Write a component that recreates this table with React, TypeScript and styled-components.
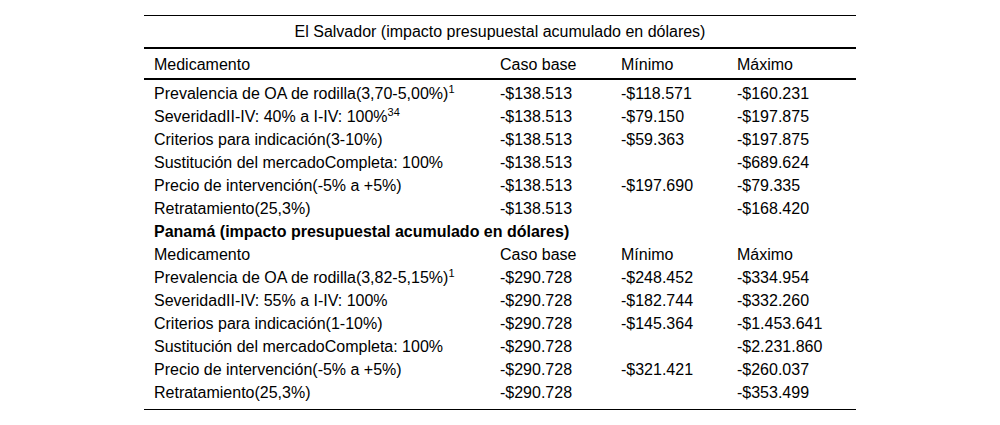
import React from "react";
import styled, { createGlobalStyle } from "styled-components";

const Global = createGlobalStyle`
  html, body { margin: 0; padding: 0; background: #fff; }
  body { font-family: "Liberation Sans", Arial, sans-serif; color: #000; }
`;

const Page = styled.div`
  display: flex;
  justify-content: center;
  padding-top: 15px;
`;

const Table = styled.table`
  width: 712px;
  border-collapse: collapse;
  font-size: 16px;
  table-layout: fixed;
  border-top: 1px solid #000;
  border-bottom: 1px solid #000;
`;

const TitleCell = styled.th`
  font-weight: normal;
  text-align: center;
  height: 31px;
  padding: 0;
  border-bottom: 2px solid #000;
`;

const HeadRow = styled.tr<{ $ruled?: boolean }>`
  height: ${(p) => (p.$ruled ? "31px" : "23px")};
  border-bottom: ${(p) => (p.$ruled ? "2px solid #000" : "none")};
  ${(p) => (p.$ruled ? "td { padding-top: 1px; }" : "")}
`;

const Cell = styled.td<{ $bold?: boolean }>`
  padding: 0 0 0 10px;
  white-space: nowrap;
  line-height: 23px;
  font-weight: ${(p) => (p.$bold ? "bold" : "normal")};
`;

const Row = styled.tr<{ $first?: boolean; $last?: boolean }>`
  height: 23px;
  ${(p) => (p.$first ? "height: 25px; td { padding-top: 2px; }" : "")}
  ${(p) => (p.$last ? "height: 28px; td { padding-bottom: 5px; }" : "")}
`;

const Sup = styled.sup`
  font-size: 11px;
  vertical-align: 6px;
  line-height: 0;
`;

type R = { label: React.ReactNode; base: string; min: string; max: string };

const salvador: R[] = [
  { label: <>Prevalencia de OA de rodilla(3,70-5,00%)<Sup>1</Sup></>, base: "-$138.513", min: "-$118.571", max: "-$160.231" },
  { label: <>SeveridadII-IV: 40% a I-IV: 100%<Sup>34</Sup></>, base: "-$138.513", min: "-$79.150", max: "-$197.875" },
  { label: "Criterios para indicación(3-10%)", base: "-$138.513", min: "-$59.363", max: "-$197.875" },
  { label: "Sustitución del mercadoCompleta: 100%", base: "-$138.513", min: "", max: "-$689.624" },
  { label: "Precio de intervención(-5% a +5%)", base: "-$138.513", min: "-$197.690", max: "-$79.335" },
  { label: "Retratamiento(25,3%)", base: "-$138.513", min: "", max: "-$168.420" },
];

const panama: R[] = [
  { label: <>Prevalencia de OA de rodilla(3,82-5,15%)<Sup>1</Sup></>, base: "-$290.728", min: "-$248.452", max: "-$334.954" },
  { label: "SeveridadII-IV: 55% a I-IV: 100%", base: "-$290.728", min: "-$182.744", max: "-$332.260" },
  { label: "Criterios para indicación(1-10%)", base: "-$290.728", min: "-$145.364", max: "-$1.453.641" },
  { label: "Sustitución del mercadoCompleta: 100%", base: "-$290.728", min: "", max: "-$2.231.860" },
  { label: "Precio de intervención(-5% a +5%)", base: "-$290.728", min: "-$321.421", max: "-$260.037" },
  { label: "Retratamiento(25,3%)", base: "-$290.728", min: "", max: "-$353.499" },
];

const DataRow = ({ r, first, last }: { r: R; first?: boolean; last?: boolean }) => (
  <Row $first={first} $last={last}>
    <Cell>{r.label}</Cell>
    <Cell>{r.base}</Cell>
    <Cell>{r.min}</Cell>
    <Cell>{r.max}</Cell>
  </Row>
);

const Header = ({ ruled }: { ruled?: boolean }) => (
  <HeadRow $ruled={ruled}>
    <Cell>Medicamento</Cell>
    <Cell>Caso base</Cell>
    <Cell>Mínimo</Cell>
    <Cell>Máximo</Cell>
  </HeadRow>
);

export default function App() {
  return (
    <>
      <Global />
      <Page>
        <Table>
          <colgroup>
            <col style={{ width: 346 }} />
            <col style={{ width: 121 }} />
            <col style={{ width: 116 }} />
            <col style={{ width: 129 }} />
          </colgroup>
          <thead>
            <tr>
              <TitleCell colSpan={4}>El Salvador (impacto presupuestal acumulado en dólares)</TitleCell>
            </tr>
            <Header ruled />
          </thead>
          <tbody>
            {salvador.map((r, i) => (
              <DataRow key={i} r={r} first={i === 0} />
            ))}
            <Row>
              <Cell $bold colSpan={4}>Panamá (impacto presupuestal acumulado en dólares)</Cell>
            </Row>
            <Header />
            {panama.map((r, i) => (
              <DataRow key={i} r={r} last={i === panama.length - 1} />
            ))}
          </tbody>
        </Table>
      </Page>
    </>
  );
}
